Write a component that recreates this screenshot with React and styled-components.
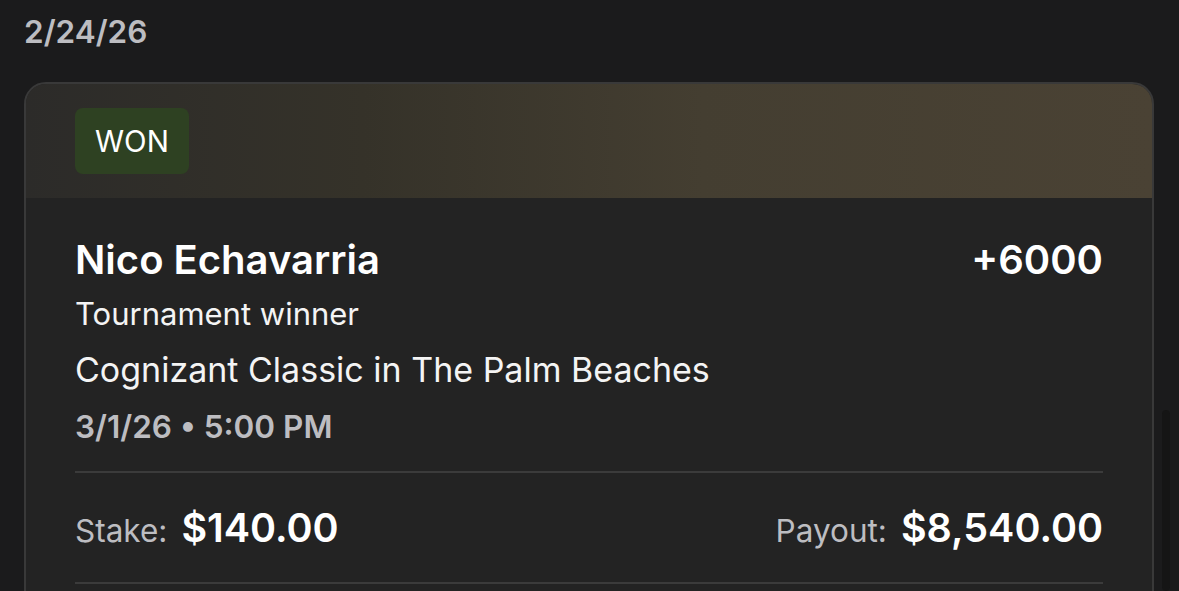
import React from "react";
import styled, { createGlobalStyle } from "styled-components";

const Global = createGlobalStyle`
  html, body { margin: 0; padding: 0; background: #1b1b1c; }
  body { width: 1179px; height: 591px; overflow: hidden; font-family: Inter, "Noto Sans", sans-serif; -webkit-font-smoothing: antialiased; }
`;

const Page = styled.div`
  position: relative;
  width: 1179px;
  height: 591px;
  overflow: hidden;
  padding: 12px 25px 0 24px;
  box-sizing: border-box;
`;

const DateHeading = styled.div`
  color: #bdbdc1;
  font-size: 31.5px;
  font-weight: 600;
  line-height: 40px;
`;

const Card = styled.div`
  margin-top: 30px;
  border: 2px solid #393939;
  border-radius: 22px;
  overflow: hidden;
  background: #232323;
`;

const Header = styled.div`
  height: 114px;
  box-sizing: border-box;
  padding: 24px 49px;
  background: linear-gradient(90deg, #2c2b29 0%, #353229 30%, #443e31 60%, #4a4234 100%);
`;

const Badge = styled.span`
  display: inline-flex;
  align-items: center;
  height: 66px;
  padding: 0 20px;
  border-radius: 8px;
  background: #2e4122;
  color: #ffffff;
  font-size: 29.5px;
  font-weight: 400;
`;

const Body = styled.div`
  padding: 38px 49px 60px;
`;

const Row = styled.div`
  display: flex;
  justify-content: space-between;
  align-items: baseline;
`;

const Title = styled.div`
  color: #ffffff;
  font-size: 40px;
  font-weight: 600;
  line-height: 48px;
`;

const Line = styled.div`
  color: ${(p) => p.$color || "#f4f4f4"};
  font-size: ${(p) => p.$size}px;
  font-weight: ${(p) => p.$weight || 400};
  line-height: 57px;
  margin-top: ${(p) => p.$top || 0}px;
`;

const Divider = styled.div`
  height: 2px;
  background: #3b3b3b;
  margin-top: ${(p) => p.$top}px;
`;

const Amounts = styled(Row)`
  height: 109px;
  align-items: center;
`;

const Amount = styled.div`
  display: flex;
  align-items: baseline;
  gap: 14px;
`;

const Label = styled.span`
  color: #bdbdc1;
  font-size: 31.5px;
`;

const Value = styled.span`
  color: #ffffff;
  font-size: 39.5px;
  font-weight: 600;
`;

const Scroll = styled.div`
  position: absolute;
  right: 9px;
  top: 410px;
  width: 8px;
  bottom: 0;
  border-radius: 4px;
  background: #151515;
`;

export default function App() {
  return (
    <>
      <Global />
      <Page>
        <DateHeading>2/24/26</DateHeading>
        <Card>
          <Header>
            <Badge>WON</Badge>
          </Header>
          <Body>
            <Row>
              <Title>Nico Echavarria</Title>
              <Title>+6000</Title>
            </Row>
            <Line $size={31} $top={1}>Tournament winner</Line>
            <Line $size={34} $top={-1}>Cognizant Classic in The Palm Beaches</Line>
            <Line $size={31.5} $weight={600} $color="#bdbdc1">3/1/26 • 5:00 PM</Line>
            <Divider $top={16} />
            <Amounts>
              <Amount>
                <Label>Stake:</Label>
                <Value>$140.00</Value>
              </Amount>
              <Amount>
                <Label>Payout:</Label>
                <Value>$8,540.00</Value>
              </Amount>
            </Amounts>
            <Divider $top={0} />
          </Body>
        </Card>
        <Scroll />
      </Page>
    </>
  );
}
